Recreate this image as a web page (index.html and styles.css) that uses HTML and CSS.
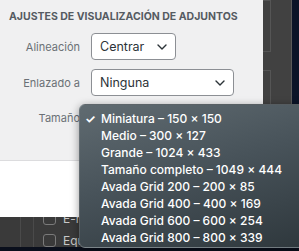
FILE: index.html
```html
<!DOCTYPE html>
<html lang="es">
<head>
  <meta charset="UTF-8" />
  <title>Ajustes de adjuntos</title>
  <link rel="stylesheet" href="styles.css">
</head>
<body>
  <div class="screen">
    <div class="main">
      <div class="stage">
        <div class="top">
          <!-- Attachment display settings -->
          <section class="modal">
            <div class="settings">
              <h2 class="heading">Ajustes de visualización de adjuntos</h2>

              <div class="row">
                <span class="label">Alineación</span>
                <div class="select short">
                  <span>Centrar</span>
                  <svg class="chevron" width="10" height="6" viewBox="0 0 10 6"><path d="M1 1l4 4 4-4" fill="none" stroke="#2c3338" stroke-width="1.4" stroke-linecap="round" stroke-linejoin="round"/></svg>
                </div>
              </div>

              <div class="row">
                <span class="label">Enlazado a</span>
                <div class="select long">
                  <span>Ninguna</span>
                  <svg class="chevron" width="10" height="6" viewBox="0 0 10 6"><path d="M1 1l4 4 4-4" fill="none" stroke="#2c3338" stroke-width="1.4" stroke-linecap="round" stroke-linejoin="round"/></svg>
                </div>
              </div>

              <div class="row size-row">
                <span class="label">Tamaño</span>
              </div>
            </div>
            <div class="footer"></div>
          </section>

          <aside class="gutter">
            <div class="slot"></div>
            <div class="slot"></div>
          </aside>
        </div>

        <!-- List behind the modal -->
        <div class="backdrop">
          <div class="check-row first"><span class="checkbox"></span><span class="check-text">E-mail</span></div>
          <div class="check-row"><span class="checkbox"></span><span class="check-text">Equipo</span></div>
        </div>
      </div>
      <div class="edge"></div>
    </div>
    <div class="base"></div>
  </div>

  <!-- Native size popup -->
  <ul class="menu">
    <li class="item checked">Miniatura – 150 × 150</li>
    <li class="item">Medio – 300 × 127</li>
    <li class="item">Grande – 1024 × 433</li>
    <li class="item">Tamaño completo – 1049 × 444</li>
    <li class="item">Avada Grid 200 – 200 × 85</li>
    <li class="item">Avada Grid 400 – 400 × 169</li>
    <li class="item">Avada Grid 600 – 600 × 254</li>
    <li class="item">Avada Grid 800 – 800 × 339</li>
  </ul>
</body>
</html>
```

FILE: styles.css
```css
/* ===== Page ===== */
body {
  margin: 0;
  width: 299px;
  height: 251px;
  overflow: hidden;
  position: relative;
  font-family: Inter, "Noto Sans", sans-serif;
  background: #0b1222;
}

.screen {
  display: flex;
  flex-direction: column;
  height: 251px;
}

.main {
  display: flex;
  height: 247px;
}

.stage {
  width: 291px;
  display: flex;
  flex-direction: column;
  background: #3c3c3c;
}

.top {
  display: flex;
}

.edge {
  flex: 1;
  background: #0c1428;
  border-left: 1px solid #5a5a5a;
}

.base {
  flex: 1;
  background: #0a0f1c;
}

/* ===== Modal ===== */
.modal {
  width: 263px;
  display: flex;
  flex-direction: column;
}

.settings {
  height: 160px;
  background: #f0f0f1;
  border-bottom: 1px solid #dcdcde;
}

.heading {
  margin: 11px 0 0 9px;
  font-size: 10.5px;
  font-weight: 700;
  text-transform: uppercase;
  color: #555b62;
  line-height: 12px;
  white-space: nowrap;
}

.row {
  display: flex;
  align-items: center;
  gap: 11px;
  margin-top: 10px;
}

.row + .row {
  margin-top: 9px;
}

.label {
  width: 80px;
  text-align: right;
  font-size: 11px;
  color: #6b7076;
}

.select {
  box-sizing: border-box;
  height: 27px;
  display: flex;
  align-items: center;
  justify-content: space-between;
  padding: 0 8px;
  background: #fff;
  border: 1px solid #8c8f94;
  border-radius: 4px;
  font-size: 12.5px;
  color: #2c3338;
}

.short { width: 85px; }
.long { width: 143px; }

.chevron {
  display: block;
}

.row.size-row {
  margin-top: 14px;
  height: 16px;
}

.footer {
  height: 56px;
  background: #fff;
}

/* ===== Right gutter ===== */
.gutter {
  flex: 1;
  background: #414141;
}

.slot {
  width: 7px;
  height: 50px;
  border: 1px solid #555;
  border-left: none;
  margin-bottom: 18px;
}

/* ===== Backdrop list ===== */
.backdrop {
  flex: 1;
  overflow: hidden;
  padding-left: 43px;
  background:
    linear-gradient(#4a4a4a, #4a4a4a) 20px 0 / 1px 100% no-repeat,
    linear-gradient(#4a4a4a, #4a4a4a) 33px 0 / 1px 100% no-repeat,
    #3a3a3a;
}

.check-row {
  display: flex;
  align-items: center;
  gap: 7px;
  height: 14px;
  margin-bottom: 8px;
}

.check-row.first {
  margin-top: -6px;
}

.checkbox {
  box-sizing: border-box;
  width: 13px;
  height: 13px;
  border: 1px solid #7a7a7a;
  border-radius: 3px;
}

.check-text {
  font-size: 12px;
  color: #c8c8c8;
}

/* ===== Popup menu ===== */
.menu {
  position: absolute;
  left: 79px;
  top: 104px;
  width: 240px;
  height: 144px;
  box-sizing: border-box;
  margin: 0;
  padding: 5px 0 0;
  list-style: none;
  border-radius: 6px;
  border: 1px solid rgba(255, 255, 255, 0.18);
  background: linear-gradient(165deg, #606b71 0%, #48535a 45%, #2e373c 100%);
  box-shadow: 0 2px 8px rgba(0, 0, 0, 0.4);
}

.item {
  position: relative;
  height: 17px;
  line-height: 17px;
  padding-left: 21px;
  font-size: 12px;
  font-weight: 500;
  color: #fff;
  white-space: nowrap;
}

.checked::before {
  content: "✓";
  position: absolute;
  left: 5px;
  font-weight: 700;
}
```
